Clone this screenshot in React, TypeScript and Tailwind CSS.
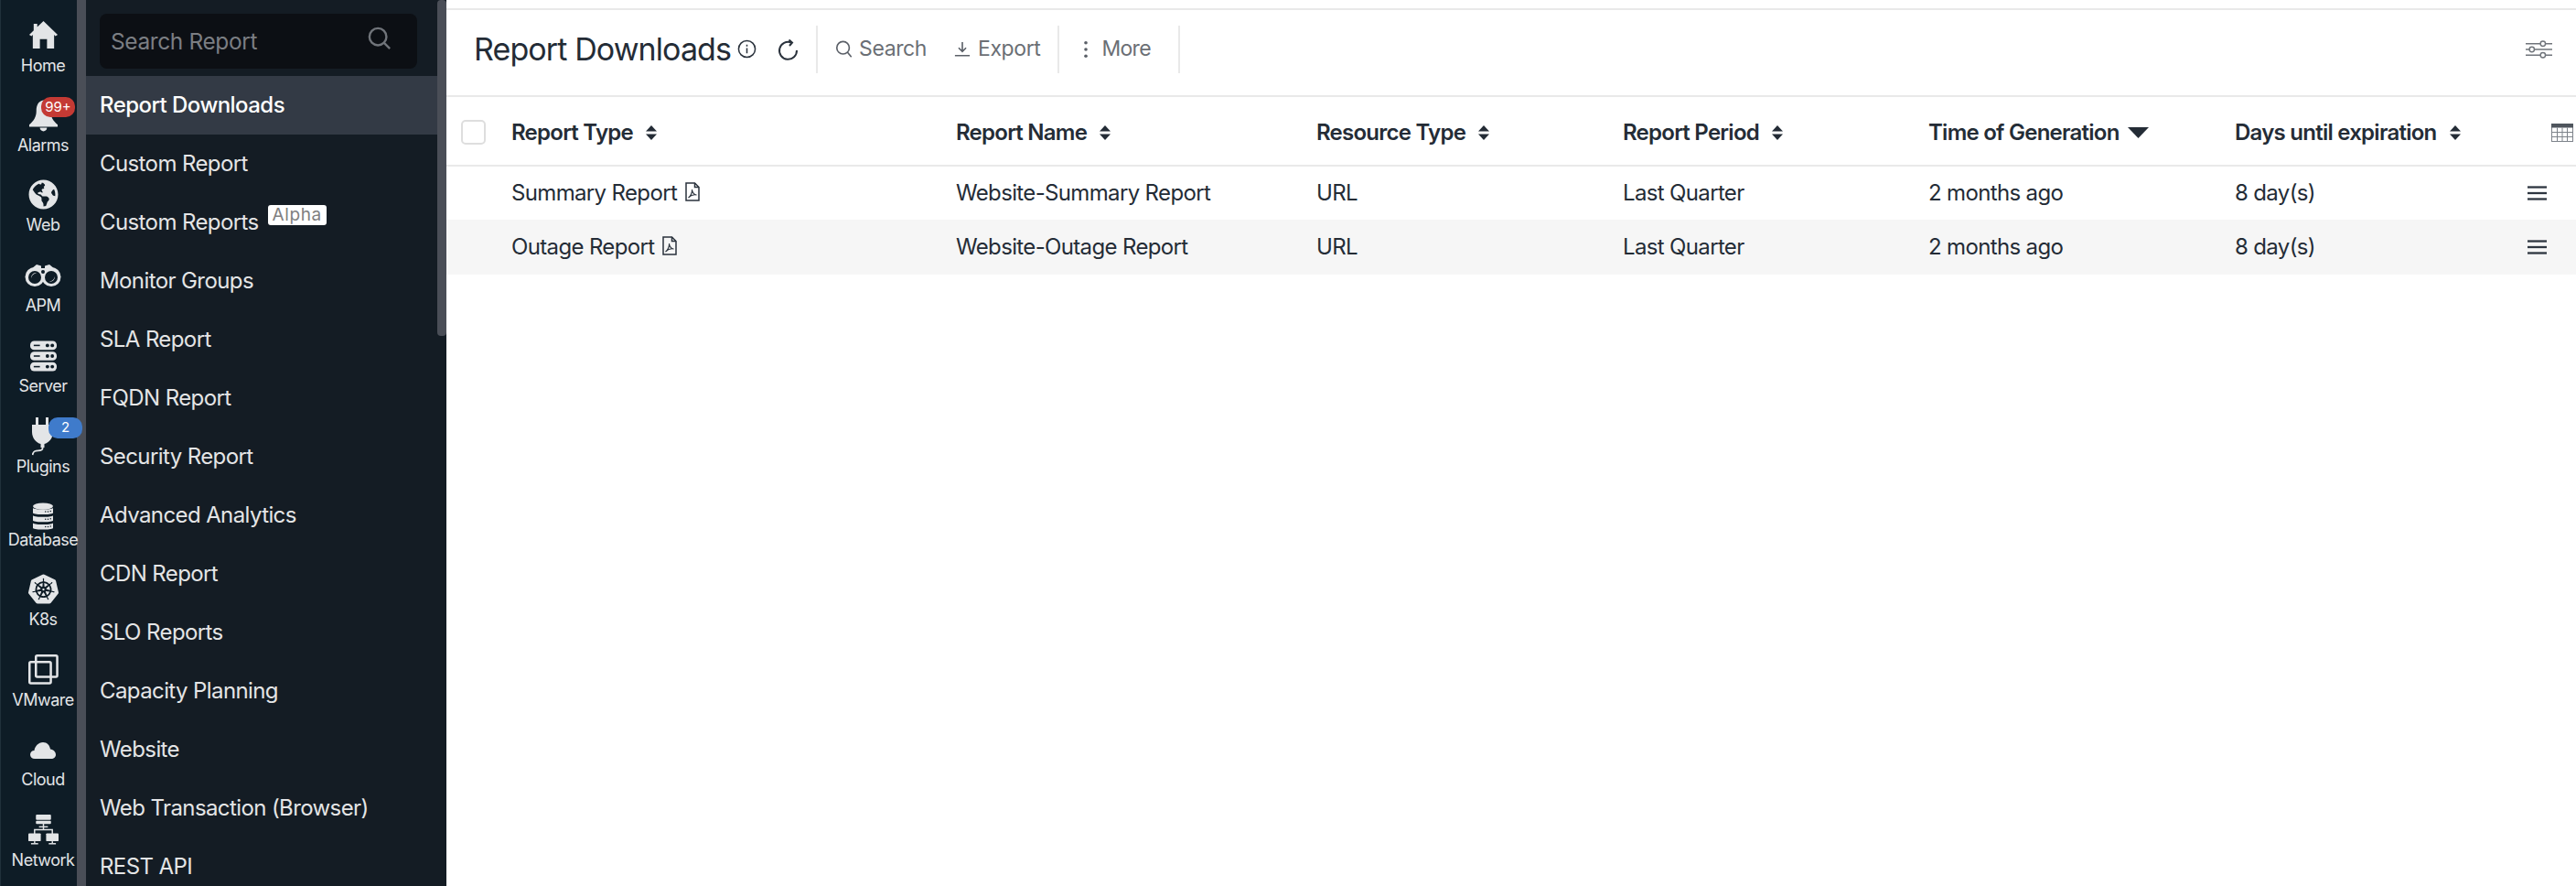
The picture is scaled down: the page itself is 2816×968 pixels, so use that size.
import type { ReactNode } from "react";
import { FaGlobeAmericas } from "react-icons/fa";
import { SiKubernetes } from "react-icons/si";

const HomeIcon = () => (
    <svg viewBox="0 0 34 34" className="h-[33px] w-[33px]" fill="currentColor">
        <path d="M17 1 33 16.5 30.5 18 29 16.6V32H21V21.5H13V32H5V16.6L3.5 18 1 16.5 6 11.7V4H10V7.8Z" />
    </svg>
);

const BellIcon = () => (
    <svg viewBox="0 0 34 36" className="h-[36px] w-[33px]" fill="currentColor">
        <path d="M17 1C11 2 9 7 9 13 9 20 6 24 1 28.5V31H33V28.5C28 24 25 20 25 13 25 7 23 2 17 1Z" />
        <path d="M13 32H21C21 34.5 19 36 17 36S13 34.5 13 32Z" />
    </svg>
);

const BinocularsIcon = () => (
    <svg viewBox="0 0 40 24" className="h-[24px] w-[40px]">
        <path d="M7 5 13 0 18 1.500V4H22V1.500L27 0 33 5 37 13H3Z" fill="currentColor" />
        <circle cx="11" cy="13.500" r="10.500" fill="currentColor" />
        <circle cx="29" cy="13.500" r="10.500" fill="currentColor" />
        <circle cx="11" cy="14" r="7" fill="#0e1c26" />
        <circle cx="29" cy="14" r="7" fill="#0e1c26" />
        <path d="M7 15A5 5 0 0 1 13 9.500 7 7 0 0 0 7 15ZM33 13A5 5 0 0 1 27 18.500 7 7 0 0 0 33 13Z" fill="currentColor" />
        <circle cx="20" cy="8" r="2" fill="#0e1c26" />
    </svg>
);

const ServerIcon = () => (
    <svg viewBox="0 0 30 34" className="h-[34px] w-[29px]">
        {[0, 12, 24].map((y) => (
            <g key={y}>
                <rect x="0" y={y} width="30" height="10" rx="4.500" fill="currentColor" />
                <rect x="4" y={y + 4.200} width="7" height="1.600" fill="#0e1c26" />
                <circle cx="19.500" cy={y + 5} r="2" fill="#0e1c26" />
                <circle cx="25" cy={y + 5} r="2" fill="#0e1c26" />
            </g>
        ))}
    </svg>
);

const PlugIcon = () => (
    <svg viewBox="0 0 24 42" className="h-[42px] w-[24px]" fill="currentColor">
        <rect x="4" y="0" width="3" height="8" />
        <rect x="15" y="0" width="3" height="8" />
        <path d="M0 8H23V16C23 23 18 28 13.500 29V33H9.500V29C5 28 0 23 0 16Z" />
        <path d="M11.500 32V34C11.500 37 6 36 3 37 1.500 37.500 1 39 0.500 41" fill="none" stroke="currentColor" strokeWidth="1.800" />
    </svg>
);

const DatabaseIcon = () => (
    <svg viewBox="0 0 24 33" className="h-[33px] w-[22px]">
        <ellipse cx="12" cy="4" rx="12" ry="4" fill="currentColor" />
        {[5, 14, 23].map((y) => (
            <g key={y}>
                <path d={`M0 ${y + 1}C3 ${y + 3.500} 21 ${y + 3.500} 24 ${y + 1}V${y + 7}C21 ${y + 9.500} 3 ${y + 9.500} 0 ${y + 7}Z`} fill="currentColor" />
                <circle cx="15" cy={y + 5.500} r="0.800" fill="#0e1c26" />
                <circle cx="18" cy={y + 5.500} r="0.800" fill="#0e1c26" />
                <circle cx="21" cy={y + 5} r="0.800" fill="#0e1c26" />
            </g>
        ))}
    </svg>
);

const VmwareIcon = () => (
    <svg viewBox="0 0 34 34" className="h-[33px] w-[33px]" fill="none" stroke="currentColor" strokeWidth="2.600">
        <rect x="8.500" y="1.300" width="24" height="24" rx="1.500" />
        <rect x="1.300" y="8.500" width="24" height="24" rx="1.500" />
    </svg>
);

const CloudIcon = () => (
    <svg viewBox="0 0 28 20" className="h-[20px] w-[28px]" fill="currentColor">
        <path d="M5 20C2 20 0 18 0 15.500 0 13 2 11 4.500 11 5 6.500 9 2 14 2 18.500 2 21.500 5.500 22 9.500 25.500 10 28 12.500 28 15.500 28 18 26 20 23 20Z" />
    </svg>
);

const NetworkIcon = () => (
    <svg viewBox="0 0 34 34" className="h-[33px] w-[33px]" fill="currentColor">
        <rect x="8.500" y="0" width="17" height="6" rx="1" />
        <rect x="8.500" y="7" width="17" height="3.500" rx="1" />
        <path d="M17 10V17M7 22V17H27V22" fill="none" stroke="currentColor" strokeWidth="1.500" />
        <rect x="12" y="13" width="10" height="1.500" />
        <rect x="0" y="21" width="14" height="9" rx="1" />
        <rect x="20" y="21" width="14" height="9" rx="1" />
        <rect x="3" y="32" width="8" height="1.500" />
        <rect x="23" y="32" width="8" height="1.500" />
        <rect x="6.300" y="30" width="1.500" height="2" />
        <rect x="26.300" y="30" width="1.500" height="2" />
    </svg>
);

const SortIcon = () => (
    <svg viewBox="0 0 12 16" className="h-[16px] w-[12px]" fill="#242c36">
        <path d="M6 0 12 6.500H0Z" />
        <path d="M6 16 0 9.500H12Z" />
    </svg>
);

const PdfIcon = () => (
    <svg viewBox="0 0 16 21" className="h-[21px] w-[16px]" fill="none" stroke="#2a323c" strokeWidth="1.500">
        <path d="M1 1H10.500L15 5.500V20H1Z" />
        <path d="M10.500 1V5.500H15" />
        <path d="M3.500 17C6 15.500 8 11 7.500 8 7.500 10.500 9.500 14 12.500 14 10 13.500 6 14.500 3.500 17Z" strokeWidth="1.100" />
    </svg>
);

const RowMenuIcon = () => (
    <svg viewBox="0 0 22 16" className="h-[16px] w-[21px]" fill="#2e3640">
        <rect x="0" y="0" width="22" height="2.400" />
        <rect x="0" y="6.800" width="22" height="2.400" />
        <rect x="0" y="13.600" width="22" height="2.400" />
    </svg>
);

const RAIL: { label: string; icon: ReactNode; height: string; labelGap?: string; badge?: ReactNode }[] = [
    { label: "Home", icon: <HomeIcon />, height: "h-[87px]" },
    {
        label: "Alarms",
        icon: <BellIcon />,
        height: "h-[87px]",
        badge: (
            <span className="absolute left-[35px] top-[19px] flex h-[22px] w-[37px] items-center justify-center rounded-[10px] bg-[#c43a34] text-[15px] text-white">
                99+
            </span>
        ),
    },
    { label: "Web", icon: <FaGlobeAmericas className="h-[33px] w-[33px]" />, height: "h-[88px]" },
    { label: "APM", icon: <BinocularsIcon />, height: "h-[88px]" },
    { label: "Server", icon: <ServerIcon />, height: "h-[88px]" },
    {
        label: "Plugins",
        icon: <PlugIcon />,
        height: "h-[88px]",
        badge: (
            <span className="absolute left-[43px] top-[18px] flex h-[23px] w-[37px] items-center justify-center rounded-[10px] bg-[#3f7bcb] text-[15px] text-white">
                2
            </span>
        ),
    },
    { label: "Database", icon: <DatabaseIcon />, height: "h-[79px]", labelGap: "-mt-[2px]" },
    { label: "K8s", icon: <SiKubernetes className="h-[33px] w-[33px]" />, height: "h-[88px]" },
    { label: "VMware", icon: <VmwareIcon />, height: "h-[87px]" },
    { label: "Cloud", icon: <CloudIcon />, height: "h-[88px]" },
    { label: "Network", icon: <NetworkIcon />, height: "h-[78px]" },
];

const MENU = [
    "Report Downloads",
    "Custom Report",
    "Custom Reports",
    "Monitor Groups",
    "SLA Report",
    "FQDN Report",
    "Security Report",
    "Advanced Analytics",
    "CDN Report",
    "SLO Reports",
    "Capacity Planning",
    "Website",
    "Web Transaction (Browser)",
    "REST API",
];

const COLUMNS = [
    { title: "Report Type", width: "w-[486px]" },
    { title: "Report Name", width: "w-[394px]" },
    { title: "Resource Type", width: "w-[335px]" },
    { title: "Report Period", width: "w-[334px]" },
    { title: "Time of Generation", width: "w-[335px]", active: true },
    { title: "Days until expiration", width: "w-[330px]" },
];

const ROWS = [
    { type: "Summary Report", name: "Website-Summary Report", stripe: false },
    { type: "Outage Report", name: "Website-Outage Report", stripe: true },
];

const App = () => {
    return (
        <div className="flex h-[968px] w-[2816px] overflow-hidden bg-white font-['Inter',sans-serif]">
            <div className="w-[84px] shrink-0 border-l border-[#20303a] bg-[#0e1c26] pl-[9px] text-[#e3e5e7]">
                {RAIL.map((item) => (
                    <div key={item.label} className={`relative flex flex-col items-center pt-[22px] ${item.height}`}>
                        <div className="flex h-[33px] items-center justify-center">{item.icon}</div>
                        <span className={`whitespace-nowrap text-[18px] leading-[22px] tracking-[-0.5px] ${item.labelGap ?? "mt-[6px]"}`}>
                            {item.label}
                        </span>
                        {item.badge}
                    </div>
                ))}
            </div>
            <div className="w-[10px] shrink-0 bg-[#4a4e57]" />

            <div className="relative w-[394px] shrink-0 bg-[#141c24]">
                <div className="absolute right-0 top-0 h-[367px] w-[10px] rounded-[4px] bg-[#4a4e57]" />
                <div className="px-[15px] pb-[8px] pr-[32px] pt-[15px]">
                    <div className="flex h-[60px] w-[347px] items-center justify-between rounded-[8px] bg-[#0c0f14] pl-[12px] pr-[28px]">
                        <span className="text-[24.500px] tracking-[-0.4px] text-[#7b7e83]">Search Report</span>
                        <svg viewBox="0 0 28 28" className="mb-[6px] h-[26px] w-[26px]" fill="none" stroke="#70747a" strokeWidth="2.600">
                            <circle cx="12" cy="12" r="10" />
                            <path d="M19 19 26 26" />
                        </svg>
                    </div>
                </div>
                {MENU.map((item, index) => (
                    <div
                        key={item}
                        className={`flex h-[64px] w-[384px] items-center pl-[15px] text-[24px] ${
                            index === 0 ? "bg-[#333a45] font-medium tracking-[-0.55px] text-white" : "tracking-[-0.6px] text-[#e4e5e6]"
                        }`}
                    >
                        {item}
                        {item === "Custom Reports" && (
                            <span className="relative -top-[8px] ml-[10px] flex h-[22px] w-[64px] items-center justify-center rounded-[3px] bg-white text-[19px] tracking-[0.6px] text-[#808080]">
                                Alpha
                            </span>
                        )}
                    </div>
                ))}
            </div>

            <div className="min-w-0 flex-1 pt-[9px] text-[#242c36]">
                <div className="flex h-[97px] items-center justify-between border-y-2 border-[#e9e9e9] pb-[8px] pl-[30px] pr-[26px]">
                    <div className="flex items-center">
                        <h1 className="text-[34px] font-normal tracking-[-0.9px]">Report Downloads</h1>
                        <svg viewBox="0 0 22 22" className="ml-[7px] h-[21px] w-[21px]" fill="none" stroke="#2a323c" strokeWidth="1.600">
                            <circle cx="11" cy="11" r="9.500" />
                            <path d="M11 10V16M11 6V8" />
                        </svg>
                        <svg viewBox="0 0 24 24" className="ml-[23px] mt-[2px] h-[24px] w-[24px]" fill="none" stroke="#2a323c" strokeWidth="2">
                            <path d="M15 3.500A9.500 9.500 0 1 0 21 12" />
                            <path d="M12.500 0.500 16 3.500 13 7" />
                        </svg>
                        <div className="ml-[18px] h-[52px] w-[2px] bg-[#e9e9e9]" />
                        <div className="flex items-center text-[23px] tracking-[-0.4px] text-[#6b6f75]">
                            <svg viewBox="0 0 20 22" className="ml-[19px] h-[20px] w-[19px]" fill="none" stroke="#5b6068" strokeWidth="1.800">
                                <circle cx="9" cy="9" r="7.500" />
                                <path d="M14 14 19 20" />
                            </svg>
                            <span className="ml-[7px]">Search</span>
                            <svg viewBox="0 0 20 20" className="ml-[30px] h-[18px] w-[18px]" fill="none" stroke="#5b6068" strokeWidth="1.800">
                                <path d="M10 1V12M5.500 8 10 12.500 14.500 8M1 17.500H19" />
                            </svg>
                            <span className="ml-[8px]">Export</span>
                            <div className="ml-[19px] h-[52px] w-[2px] bg-[#e9e9e9]" />
                            <svg viewBox="0 0 6 22" className="ml-[26px] h-[20px] w-[6px]" fill="#5b6068">
                                <circle cx="3" cy="3" r="2" />
                                <circle cx="3" cy="11" r="2" />
                                <circle cx="3" cy="19" r="2" />
                            </svg>
                            <span className="ml-[14px] tracking-[-0.7px]">More</span>
                            <div className="ml-[30px] h-[52px] w-[2px] bg-[#e9e9e9]" />
                        </div>
                    </div>
                    <svg viewBox="0 0 30 20" className="h-[20px] w-[29px]" fill="none" stroke="#70757b" strokeWidth="1.500">
                        <path d="M0 3.500H30M0 10H30M0 16.500H30" />
                        <circle cx="19.500" cy="3.500" r="2.800" fill="white" />
                        <circle cx="7" cy="10" r="2.800" fill="white" />
                        <circle cx="19.500" cy="16.500" r="2.800" fill="white" />
                    </svg>
                </div>

                <div className="flex h-[76px] items-center border-b-2 border-[#e9e9e9] pt-[3px]">
                    <div className="ml-[16px] mr-[28px] h-[27px] w-[27px] rounded-[5px] border-2 border-[#dedede] bg-white" />
                    {COLUMNS.map((col) => (
                        <div key={col.title} className={`flex items-center text-[24px] font-semibold tracking-[-0.75px] ${col.width}`}>
                            <span className="whitespace-nowrap">{col.title}</span>
                            {col.active ? (
                                <svg viewBox="0 0 23 12" className="ml-[9px] h-[12px] w-[23px]" fill="#242c36">
                                    <path d="M0 0H23L11.500 12Z" />
                                </svg>
                            ) : (
                                <span className="ml-[14px]">
                                    <SortIcon />
                                </span>
                            )}
                        </div>
                    ))}
                    <svg viewBox="0 0 24 20" className="ml-[16px] h-[20px] w-[24px] shrink-0" fill="none" stroke="#7d838a" strokeWidth="1">
                        <rect x="0.500" y="0.500" width="23" height="19" fill="#fff" />
                        <rect x="0" y="0" width="24" height="4.500" fill="#4f555d" stroke="none" />
                        <path d="M0 9.500H24M0 14.500H24M6.500 4.500V20M12 4.500V20M17.500 4.500V20" />
                    </svg>
                </div>

                {ROWS.map((row) => (
                    <div key={row.name} className={`flex items-center ${row.stripe ? "h-[60px] bg-[#f6f6f6]" : "h-[58px]"} text-[24px] tracking-[-0.65px]`}>
                        <div className="ml-[71px] flex w-[486px] items-center">
                            {row.type}
                            <span className="ml-[9px] -mt-[3px]">
                                <PdfIcon />
                            </span>
                        </div>
                        <div className="w-[394px]">{row.name}</div>
                        <div className="w-[335px]">URL</div>
                        <div className="w-[334px]">Last Quarter</div>
                        <div className="w-[335px]">2 months ago</div>
                        <div className="w-[320px]">8 day(s)</div>
                        <RowMenuIcon />
                    </div>
                ))}
            </div>
        </div>
    );
};

export default App;
